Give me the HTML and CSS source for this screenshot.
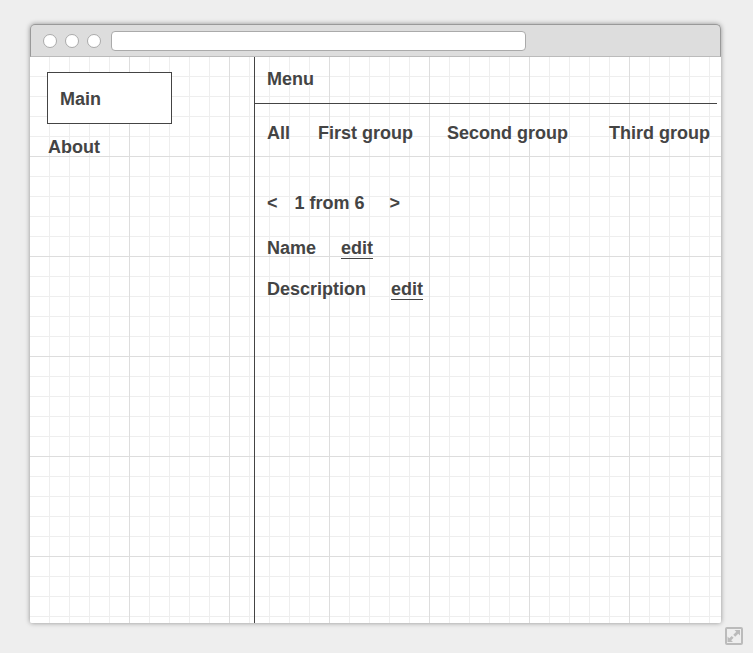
FILE: index.html
```html
<!DOCTYPE html>
<html lang="en">
<head>
<meta charset="utf-8">
<meta name="viewport" content="width=device-width, initial-scale=1">
<title>Menu</title>
<link rel="stylesheet" href="styles.css">
</head>
<body>
<div class="window">
  <header class="titlebar">
    <span class="dot"></span>
    <span class="dot"></span>
    <span class="dot"></span>
    <input class="address" type="text" aria-label="Address">
  </header>
  <div class="canvas">
    <nav class="sidebar">
      <a class="side-link side-link-active" href="#main">Main</a>
      <a class="side-link" href="#about">About</a>
    </nav>
    <main class="content">
      <h1 class="heading">Menu</h1>
      <nav class="groups">
        <a href="#all">All</a>
        <a href="#first">First group</a>
        <a href="#second">Second group</a>
        <a href="#third">Third group</a>
      </nav>
      <div class="pager">
        <button class="prev" type="button">&lt;</button>
        <span>1 from 6</span>
        <button class="next" type="button">&gt;</button>
      </div>
      <div class="field"><span>Name</span><a class="edit" href="#edit-name">edit</a></div>
      <div class="field"><span>Description</span><a class="edit" href="#edit-description">edit</a></div>
    </main>
  </div>
</div>
<button class="expand" type="button" aria-label="Expand">
  <svg width="18" height="18" viewBox="0 0 18 18" aria-hidden="true">
    <rect x="1" y="1" width="16" height="16" rx="1" fill="none" stroke="#bbb" stroke-width="2"/>
    <path d="M9.500 3H15v5.500L13.200 6.700 10.200 9.700 8.300 7.800 11.300 4.800zM2.500 9.500l1.800 1.800 2.400-2.400 1.900 1.900-2.400 2.400L8 15H2.500z" fill="#bbb"/>
  </svg>
</button>
</body>
</html>
```
FILE: styles.css
```css
* {
  box-sizing: border-box;
}

body {
  display: flex;
  min-height: 100vh;
  margin: 0;
  padding: 24px 32px 30px 30px;
  background: #eee;
  color: #444;
  font: bold 18px/20px "Liberation Sans", Arial, sans-serif;
}

a {
  color: inherit;
  text-decoration: none;
}

button {
  padding: 0;
  border: 0;
  background: none;
  color: inherit;
  font: inherit;
}

.window {
  display: flex;
  flex: 1;
  flex-direction: column;
  min-width: 0;
  border-radius: 5px 5px 2px 2px;
  box-shadow: 0 0 5px rgba(0, 0, 0, 0.4);
}

.titlebar {
  display: flex;
  align-items: center;
  gap: 8px;
  height: 33px;
  padding: 0 12px;
  border: 1px solid #999;
  border-bottom-color: #bbb;
  border-radius: 5px 5px 0 0;
  background: #ddd;
}

.dot {
  width: 14px;
  height: 14px;
  border: 1px solid #aaa;
  border-radius: 50%;
  background: #fff;
}

.address {
  width: 415px;
  height: 20px;
  margin-left: 2px;
  padding: 0 6px;
  border: 1px solid #aaa;
  border-radius: 4px;
  background: #fff;
  font-size: 12px;
}

.canvas {
  display: flex;
  flex: 1;
  border-radius: 0 0 2px 2px;
  background-color: #fff;
  background-image:
    linear-gradient(to right, transparent 99px, #ddd 99px),
    linear-gradient(to bottom, transparent 99px, #ddd 99px),
    linear-gradient(to right, transparent 19px, #eee 19px),
    linear-gradient(to bottom, transparent 19px, #eee 19px);
  background-size: 100px 100px, 100px 100px, 20px 20px, 20px 20px;
}

.sidebar {
  display: flex;
  flex: none;
  flex-direction: column;
  align-items: flex-start;
  gap: 13px;
  width: 224px;
  padding: 15px 17px;
}

.side-link {
  padding-left: 1px;
}

.side-link-active {
  width: 125px;
  padding: 16px 12px 14px;
  border: 1px solid #444;
  background: #fff;
}

.content {
  flex: 1;
  min-width: 0;
  border-left: 1px solid #444;
}

.heading {
  margin: 0 4px 0 0;
  padding: 12px 12px 14px;
  border-bottom: 1px solid #444;
  font-size: 18px;
}

.groups {
  display: grid;
  grid-template-columns: 51px 129px 162px auto;
  padding: 19px 0 50px 12px;
  white-space: nowrap;
}

.pager {
  display: flex;
  padding: 0 12px 25px;
}

.prev {
  margin-right: 17px;
}

.next {
  margin-left: 25px;
}

.field {
  display: flex;
  gap: 25px;
  padding: 0 12px 20px;
}

.edit {
  border-bottom: 1px solid #444;
}

.expand {
  position: fixed;
  right: 10px;
  bottom: 8px;
  line-height: 0;
}
```
